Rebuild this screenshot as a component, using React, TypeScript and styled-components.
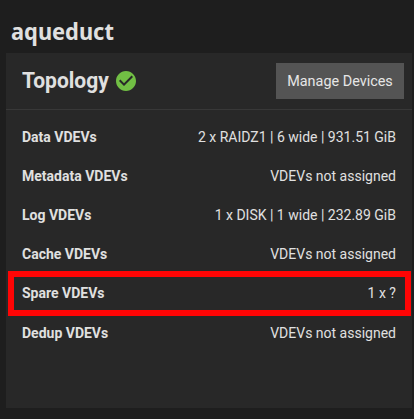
import React from 'react';
import styled, { createGlobalStyle } from 'styled-components';

const GlobalStyle = createGlobalStyle`
  * { box-sizing: border-box; }
  body { margin: 0; background: #1e1e1e; font-family: Roboto, sans-serif; color: #e0e0e0; }
`;

const Page = styled.main`
  height: 419px;
  padding: 9px 2px 11px 6px;
  display: flex;
  flex-direction: column;
  overflow: hidden;
`;

const PoolName = styled.h1`
  margin: 0;
  height: 44px;
  flex: none;
  padding-left: 5px;
  font: 700 24px/43px 'Noto Sans', sans-serif;
`;

const Card = styled.section`
  flex: 1;
  background: #282828;
`;

const CardHeader = styled.header`
  height: 57px;
  padding: 0 8px 0 16px;
  display: flex;
  align-items: center;
  border-bottom: 1px solid #383838;
`;

const CardTitle = styled.h2`
  margin: 0;
  width: 87px;
  font-size: 22px;
  line-height: 30px;
  font-weight: 700;
  white-space: nowrap;
`;

const Condensed = styled.span<{ $ratio: number; $origin?: string }>`
  display: inline-block;
  transform: scaleX(${(p) => p.$ratio});
  transform-origin: ${(p) => p.$origin ?? 'left'};
`;

const StatusIcon = styled.svg`
  width: 24px;
  height: 24px;
  margin-left: 5px;
  fill: #71bf44;
`;

const Button = styled.button`
  width: 128px;
  height: 36px;
  margin-left: auto;
  padding: 0;
  border: 0;
  background: #545454;
  color: #e6e6e6;
  font: 400 15px/36px Roboto, sans-serif;
  white-space: nowrap;
`;

const Rows = styled.dl`
  margin: 0;
  padding: 7px 16px 0;
`;

const Row = styled.div`
  position: relative;
  height: 39.2px;
  display: flex;
  align-items: center;
  justify-content: space-between;
  font-size: 14px;
  line-height: 20px;
`;

const Label = styled.dt`
  font-weight: 700;
`;

const Value = styled.dd`
  margin: 0;
`;

const Highlight = styled.div`
  position: absolute;
  inset: -2.8px -15px auto -14px;
  height: 45px;
  border: 6px solid #ff0505;
`;

const vdevs = [
  { label: 'Data VDEVs', value: '2 x RAIDZ1 | 6 wide | 931.51 GiB' },
  { label: 'Metadata VDEVs', value: 'VDEVs not assigned' },
  { label: 'Log VDEVs', value: '1 x DISK | 1 wide | 232.89 GiB' },
  { label: 'Cache VDEVs', value: 'VDEVs not assigned' },
  { label: 'Spare VDEVs', value: '1 x ?', highlighted: true },
  { label: 'Dedup VDEVs', value: 'VDEVs not assigned' },
];

export default function App() {
  return (
    <>
      <GlobalStyle />
      <Page>
        <PoolName>
          <Condensed $ratio={0.91}>aqueduct</Condensed>
        </PoolName>
        <Card>
          <CardHeader>
            <CardTitle>
              <Condensed $ratio={0.955}>Topology</Condensed>
            </CardTitle>
            <StatusIcon viewBox="0 0 24 24">
              <path d="M12 2C6.500 2 2 6.500 2 12s4.500 10 10 10 10-4.500 10-10S17.500 2 12 2zm-2 15l-5-5 1.400-1.400L10 14.200l7.600-7.600L19 8l-9 9z" />
            </StatusIcon>
            <Button>
              <Condensed $ratio={0.96} $origin="center">Manage Devices</Condensed>
            </Button>
          </CardHeader>
          <Rows>
            {vdevs.map((vdev) => (
              <Row key={vdev.label}>
                <Label>{vdev.label}</Label>
                <Value>{vdev.value}</Value>
                {vdev.highlighted && <Highlight />}
              </Row>
            ))}
          </Rows>
        </Card>
      </Page>
    </>
  );
}
